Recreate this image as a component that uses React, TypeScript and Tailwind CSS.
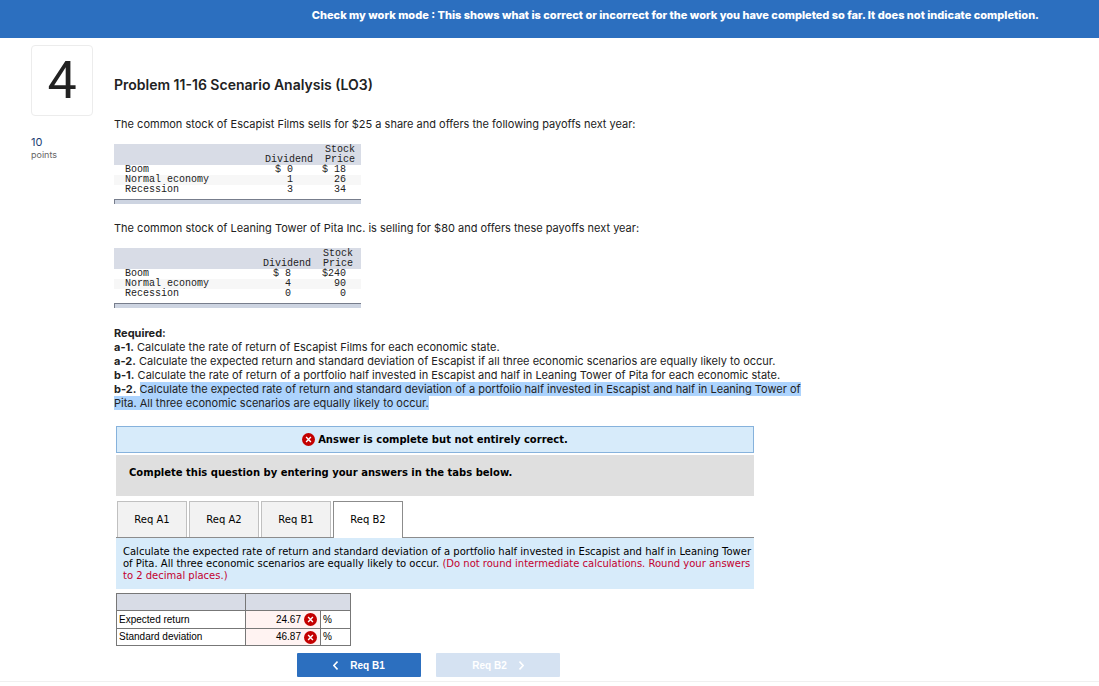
import { useState } from "react";

type PayoffRow = { state: string; dividend: string; price: string };

const escapist: PayoffRow[] = [
  { state: "Boom", dividend: "$ 0", price: "$ 18" },
  { state: "Normal economy", dividend: "1", price: "26" },
  { state: "Recession", dividend: "3", price: "34" },
];

const leaning: PayoffRow[] = [
  { state: "Boom", dividend: "$ 8", price: "$240" },
  { state: "Normal economy", dividend: "4", price: "90" },
  { state: "Recession", dividend: "0", price: "0" },
];

function PayoffTable({ rows, wide = false }: { rows: PayoffRow[]; wide?: boolean }) {
  return (
    <div className="w-[247px] font-['Liberation_Mono','Courier_New',monospace] text-[10px] leading-[10px] text-[#222]">
      <table className="w-full table-fixed border-collapse">
        <colgroup>
          <col />
          <col className="w-[56px]" />
          <col className={wide ? "w-[46px]" : "w-[44px]"} />
        </colgroup>
        <thead className="bg-[#d8dce6]">
          <tr className="align-bottom">
            <td />
            <th scope="col" className="pr-1 text-right font-normal">Dividend</th>
            <th scope="col" className="pt-px pl-2 text-left font-normal">
              Stock
              <br />
              Price
            </th>
          </tr>
        </thead>
        <tbody>
          {rows.map((row) => (
            <tr key={row.state} className="even:bg-[#f7f7f7]">
              <th scope="row" className="pl-[11px] text-left font-normal whitespace-nowrap">{row.state}</th>
              <td className="pr-6 text-right whitespace-pre">{row.dividend}</td>
              <td className="pr-[15px] text-right whitespace-pre">{row.price}</td>
            </tr>
          ))}
        </tbody>
      </table>
      <div className="mt-1 h-[5px] border-t border-l border-[#777d8c] bg-[#cdd4e1]" />
    </div>
  );
}

function WrongMark() {
  return (
    <svg viewBox="0 0 12 12" className="size-[13px] shrink-0" role="img" aria-label="Incorrect">
      <circle cx="6" cy="6" r="6" fill="#c30000" />
      <path d="M3.8 3.8l4.4 4.4M8.2 3.8L3.8 8.2" stroke="#fff" strokeWidth="1.3" />
    </svg>
  );
}

const tabs = ["Req A1", "Req A2", "Req B1", "Req B2"];

const answers = [
  { label: "Expected return", value: "24.67" },
  { label: "Standard deviation", value: "46.87" },
];

export default function App() {
  const [active, setActive] = useState("Req B2");

  return (
    <div className="min-h-screen bg-white font-['Inter',sans-serif] text-[#222]">
      <header className="bg-[#2c6fbf] pr-[60px] pb-[15px] pt-[7px] text-right text-[11px] leading-4 font-extrabold text-white">
        Check my work mode : This shows what is correct or incorrect for the work you have completed so far. It does not indicate completion.
      </header>

      <div className="flex">
        <aside className="ml-[31px] w-[83px] shrink-0 pt-[7px]">
          <div className="flex h-[71px] w-[62px] items-center justify-center rounded border border-[#ececec] font-['Roboto',sans-serif] text-[52px] leading-none">
            4
          </div>
          <p className="mt-[19px] text-[11px] leading-[14px] text-[#1c3f75]">10</p>
          <p className="text-[9px] leading-3 text-[#666]">points</p>
        </aside>

        <main className="min-w-0 grow pt-[37px] text-[11px] leading-[14px]">
          <h1 className="text-[14px] leading-5 font-semibold">Problem 11-16 Scenario Analysis (LO3)</h1>
          <p className="mt-[22px] mb-[13px]">
            The common stock of Escapist Films sells for $25 a share and offers the following payoffs next year:
          </p>
          <PayoffTable rows={escapist} />
          <p className="mt-[17px] mb-[13px]">
            The common stock of Leaning Tower of Pita Inc. is selling for $80 and offers these payoffs next year:
          </p>
          <PayoffTable rows={leaning} wide />

          <div className="mt-[18px] max-w-[696px]">
            <p className="font-bold">Required:</p>
            <p><b>a-1.</b> Calculate the rate of return of Escapist Films for each economic state.</p>
            <p><b>a-2.</b> Calculate the expected return and standard deviation of Escapist if all three economic scenarios are equally likely to occur.</p>
            <p><b>b-1.</b> Calculate the rate of return of a portfolio half invested in Escapist and half in Leaning Tower of Pita for each economic state.</p>
            <p>
              <b>b-2.</b>{" "}
              <mark className="bg-[#acd3fd] text-inherit">
                Calculate the expected rate of return and standard deviation of a portfolio half invested in Escapist and half in Leaning Tower of Pita. All three economic scenarios are equally likely to occur.
              </mark>
            </p>
          </div>

          <section className="mt-4 ml-[2px] max-w-[638px] font-['DejaVu_Sans',Verdana,sans-serif] text-[10px] leading-3 text-black">
            <div className="flex h-[27px] items-center justify-center gap-[3px] border border-[#86b2dc] bg-[#d7ebfa] font-bold">
              <WrongMark />
              Answer is complete but not entirely correct.
            </div>
            <p className="mt-[2px] bg-[#dfdfdf] px-[13px] pt-3 pb-[17px] font-bold">
              Complete this question by entering your answers in the tabs below.
            </p>

            <div role="tablist" className="mt-[5px] flex gap-[2px] border-b border-[#8c8c8c] pl-px">
              {tabs.map((tab) => (
                <button
                  key={tab}
                  type="button"
                  role="tab"
                  aria-selected={tab === active}
                  onClick={() => setActive(tab)}
                  className="h-9 w-[70px] border border-b-0 border-[#c0c0c0] bg-[#f2f2f2] aria-selected:-mb-px aria-selected:h-[37px] aria-selected:border-[#8c8c8c] aria-selected:bg-white"
                >
                  {tab}
                </button>
              ))}
            </div>

            <p className="bg-[#d7ebfa] pt-2 pb-[7px] pl-[7px]">
              Calculate the expected rate of return and standard deviation of a portfolio half invested in Escapist and half in Leaning Tower of Pita. All three economic scenarios are equally likely to occur.{" "}
              <span className="text-[#c3002f]">
                (Do not round intermediate calculations. Round your answers to 2 decimal places.)
              </span>
            </p>

            <table className="mt-1 w-[235px] table-fixed border-collapse font-['Liberation_Sans',Arial,sans-serif]">
              <colgroup>
                <col className="w-[129px]" />
                <col className="w-[75px]" />
                <col />
              </colgroup>
              <thead>
                <tr className="h-[17px] bg-[#d8dce6]">
                  <td className="border border-[#777]" />
                  <td colSpan={2} className="border border-[#777]" />
                </tr>
              </thead>
              <tbody>
                {answers.map((a, i) => (
                  <tr key={a.label} className="h-[18px] last:h-[17px]">
                    <th scope="row" className="border border-[#777] pl-[2px] text-left font-normal">
                      <label htmlFor={`answer-${i}`}>{a.label}</label>
                    </th>
                    <td className="border border-[#777] bg-[#fff3f2] pr-[3px]">
                      <div className="flex items-center gap-[3px]">
                        <input
                          id={`answer-${i}`}
                          defaultValue={a.value}
                          className="h-3 w-full min-w-0 bg-transparent text-right outline-none"
                        />
                        <WrongMark />
                      </div>
                    </td>
                    <td className="border border-[#777] pl-[2px]">%</td>
                  </tr>
                ))}
              </tbody>
            </table>

            <nav className="mt-[7px] flex justify-center gap-[15px] pr-[13px] font-['Liberation_Sans',Arial,sans-serif] font-bold text-white">
              <button type="button" className="flex h-6 w-[124px] items-center justify-center gap-3 rounded-[1px] bg-[#2c6fbf] pt-px">
                <svg width="5" height="9" viewBox="0 0 5 9" fill="none" stroke="currentColor" strokeWidth="1.5" aria-hidden="true">
                  <path d="M4.5 0.6L0.9 4.5l3.6 3.9" />
                </svg>
                Req B1
              </button>
              <button type="button" disabled className="flex h-6 w-[124px] items-center justify-center gap-3 rounded-[1px] bg-[#d5e2f2] pt-px">
                Req B2
                <svg width="5" height="9" viewBox="0 0 5 9" fill="none" stroke="currentColor" strokeWidth="1.5" aria-hidden="true">
                  <path d="M0.5 0.6L4.1 4.5L0.5 8.4" />
                </svg>
              </button>
            </nav>
          </section>
        </main>
      </div>
      <hr className="mt-1 border-[#f0f0f0]" />
    </div>
  );
}
